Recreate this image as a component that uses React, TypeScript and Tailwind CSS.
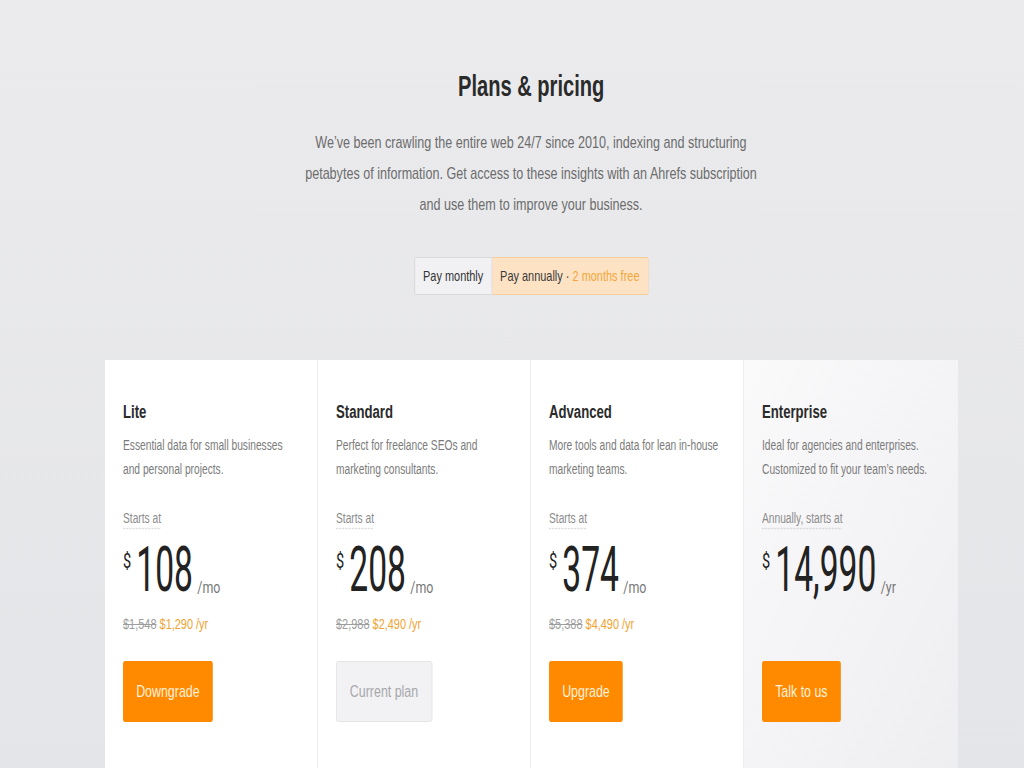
import React from "react";

type Plan = {
  name: string;
  desc: string[];
  startsLabel: string;
  price: string;
  unit: string;
  oldPrice?: string;
  yearly?: string;
  cta: string;
  current?: boolean;
  enterprise?: boolean;
};

const plans: Plan[] = [
  {
    name: "Lite",
    desc: ["Essential data for small businesses", "and personal projects."],
    startsLabel: "Starts at",
    price: "108",
    unit: "/mo",
    oldPrice: "$1,548",
    yearly: "$1,290 /yr",
    cta: "Downgrade",
  },
  {
    name: "Standard",
    desc: ["Perfect for freelance SEOs and", "marketing consultants."],
    startsLabel: "Starts at",
    price: "208",
    unit: "/mo",
    oldPrice: "$2,988",
    yearly: "$2,490 /yr",
    cta: "Current plan",
    current: true,
  },
  {
    name: "Advanced",
    desc: ["More tools and data for lean in-house", "marketing teams."],
    startsLabel: "Starts at",
    price: "374",
    unit: "/mo",
    oldPrice: "$5,388",
    yearly: "$4,490 /yr",
    cta: "Upgrade",
  },
  {
    name: "Enterprise",
    desc: ["Ideal for agencies and enterprises.", "Customized to fit your team’s needs."],
    startsLabel: "Annually, starts at",
    price: "14,990",
    unit: "/yr",
    cta: "Talk to us",
    enterprise: true,
  },
];

const font = { fontFamily: '"Liberation Sans", Arial, Helvetica, sans-serif' };
const priceFont = { fontFamily: 'Roboto, "Liberation Sans", Arial, sans-serif' };

const PlanCard: React.FC<{ plan: Plan }> = ({ plan }) => {
  return (
    <div
      className={
        "pl-[18px] pt-[40px] pb-[60px] overflow-hidden " +
        (plan.enterprise
          ? "bg-gradient-to-br from-[#fafafb] via-[#f4f4f6] to-[#eeeef1]"
          : "bg-white border-r border-[#ededef]")
      }
    >
      {/* the page text is narrow: lay out at full width, squeeze horizontally */}
      <div className="w-[267px] scale-x-[0.73] origin-left flex flex-col">
        <h3 className="text-[18px] leading-[24px] text-[#2b2b2b] font-bold">{plan.name}</h3>
        <p className="mt-[9px] text-[14px] leading-[24px] text-[#7b7b7b]">
          {plan.desc[0]}
          <br />
          {plan.desc[1]}
        </p>
        <p className="mt-[25px] text-[14px] leading-[24px] text-[#8b8b8b]">
          <span className="underline decoration-dotted decoration-[#cfcfd2] underline-offset-[5px]">
            {plan.startsLabel}
          </span>
        </p>
        <div className="mt-[22px] h-[46px] flex items-start text-[#222]" style={priceFont}>
          <span className="text-[20px] leading-[20px] mt-[-1px] mr-[7px]">$</span>
          <span className="inline-block text-[46px] leading-[46px] scale-y-[1.37] origin-[50%_85%]">
            {plan.price}
          </span>
          <span className="text-[17px] leading-[17px] mt-[27px] ml-[6px] text-[#777]">{plan.unit}</span>
        </div>
        <div className="mt-[15px] h-[22px] text-[15px] leading-[22px]">
          {plan.oldPrice && (
            <>
              <span className="line-through text-[#9d9d9d]">{plan.oldPrice}</span>{" "}
              <span className="text-[#f0a432]">{plan.yearly}</span>
            </>
          )}
        </div>
        <div className="mt-[26px]">
          {plan.current ? (
            <button className="h-[61px] px-[18px] rounded-[3px] bg-[#f2f2f4] border border-[#e2e2e5] text-[17px] text-[#a7a7ab]">
              {plan.cta}
            </button>
          ) : (
            <button className="h-[61px] px-[18px] rounded-[3px] bg-[#ff8a00] text-[17px] text-[#fff1dc]">
              {plan.cta}
            </button>
          )}
        </div>
      </div>
    </div>
  );
};

export default function App() {
  return (
    <div
      className="w-full min-h-screen bg-gradient-to-b from-[#ebebed] to-[#e4e5e8] overflow-hidden"
      style={font}
    >
      <div className="w-[1062px] flex flex-col items-center pt-[66px]">
        <h1 className="text-[30px] leading-[40px] font-bold text-[#2a2a2a] scale-x-[0.67] origin-center">
          Plans &amp; pricing
        </h1>
        <p className="mt-[21px] w-[660px] text-center text-[17px] leading-[31px] text-[#6c6c6c] scale-x-[0.74] origin-center">
          We’ve been crawling the entire web 24/7 since 2010, indexing and structuring
          <br />
          petabytes of information. Get access to these insights with an Ahrefs subscription
          <br />
          and use them to improve your business.
        </p>
        <div className="mt-[37px] flex h-[38px] text-[15px] scale-x-[0.73] origin-center">
          <button className="px-[11px] bg-[#f1f1f3] border border-[#d6d6d9] rounded-l-[2px] text-[#333]">
            Pay monthly
          </button>
          <button className="px-[11px] bg-[#fde2c4] border border-l-0 border-[#f5cb9b] rounded-r-[2px] text-[#3a3a3a]">
            Pay annually · <span className="text-[#f2a73a]">2 months free</span>
          </button>
        </div>
        <div className="mt-[65px] w-[853px] grid grid-cols-4">
          {plans.map((p) => (
            <PlanCard key={p.name} plan={p} />
          ))}
        </div>
      </div>
    </div>
  );
}
